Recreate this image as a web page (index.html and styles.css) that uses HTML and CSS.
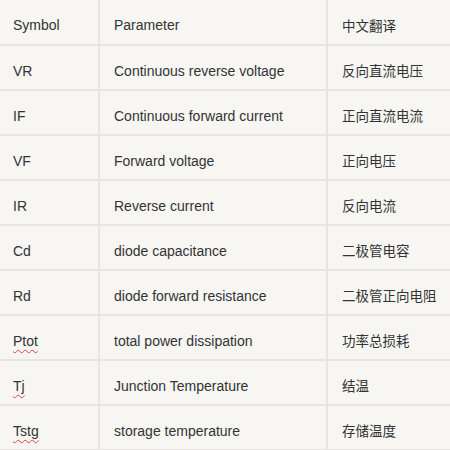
FILE: index.html
```html
<!DOCTYPE html>
<html>
<head>
<meta charset="utf-8">
<link rel="stylesheet" href="styles.css">
</head>
<body>
<table class="params">
  <tr><td>Symbol</td><td>Parameter</td><td class="zh">中文翻译</td></tr>
  <tr><td>VR</td><td>Continuous reverse voltage</td><td class="zh">反向直流电压</td></tr>
  <tr><td>IF</td><td>Continuous forward current</td><td class="zh">正向直流电流</td></tr>
  <tr><td>VF</td><td>Forward voltage</td><td class="zh">正向电压</td></tr>
  <tr><td>IR</td><td>Reverse current</td><td class="zh">反向电流</td></tr>
  <tr><td>Cd</td><td>diode capacitance</td><td class="zh">二极管电容</td></tr>
  <tr><td>Rd</td><td>diode forward resistance</td><td class="zh">二极管正向电阻</td></tr>
  <tr><td><span class="spell">Ptot</span></td><td>total power dissipation</td><td class="zh">功率总损耗</td></tr>
  <tr><td><span class="spell">Tj</span></td><td>Junction Temperature</td><td class="zh">结温</td></tr>
  <tr><td><span class="spell">Tstg</span></td><td>storage temperature</td><td class="zh">存储温度</td></tr>
</table>
</body>
</html>
```
FILE: styles.css
```css
html, body {
  margin: 0;
  padding: 0;
  background: #f7f6f3;
}
.params {
  width: 450px;
  border-collapse: collapse;
  table-layout: fixed;
  font-family: "Liberation Sans", Arial, "Noto Sans CJK SC", sans-serif;
  font-size: 14px;
  color: #333;
}
.params td {
  height: 45px;
  box-sizing: border-box;
  padding: 6px 0 0 14px;
  border-bottom: 2px solid #e6e5e2;
  border-right: 2px solid #e6e5e2;
  white-space: nowrap;
  vertical-align: middle;
}
.params td:first-child {
  width: 99px;
  padding-left: 13px;
}
.params td:nth-child(2) {
  width: 228px;
}
.params td:last-child {
  border-right: none;
}
.params td.zh {
  font-family: "Noto Sans CJK SC", sans-serif;
  font-size: 13.5px;
  padding-left: 14px;
  padding-top: 5px;
}
.spell {
  text-decoration: underline wavy #e0403c;
  text-decoration-thickness: 1px;
  text-underline-offset: 3px;
}
```
